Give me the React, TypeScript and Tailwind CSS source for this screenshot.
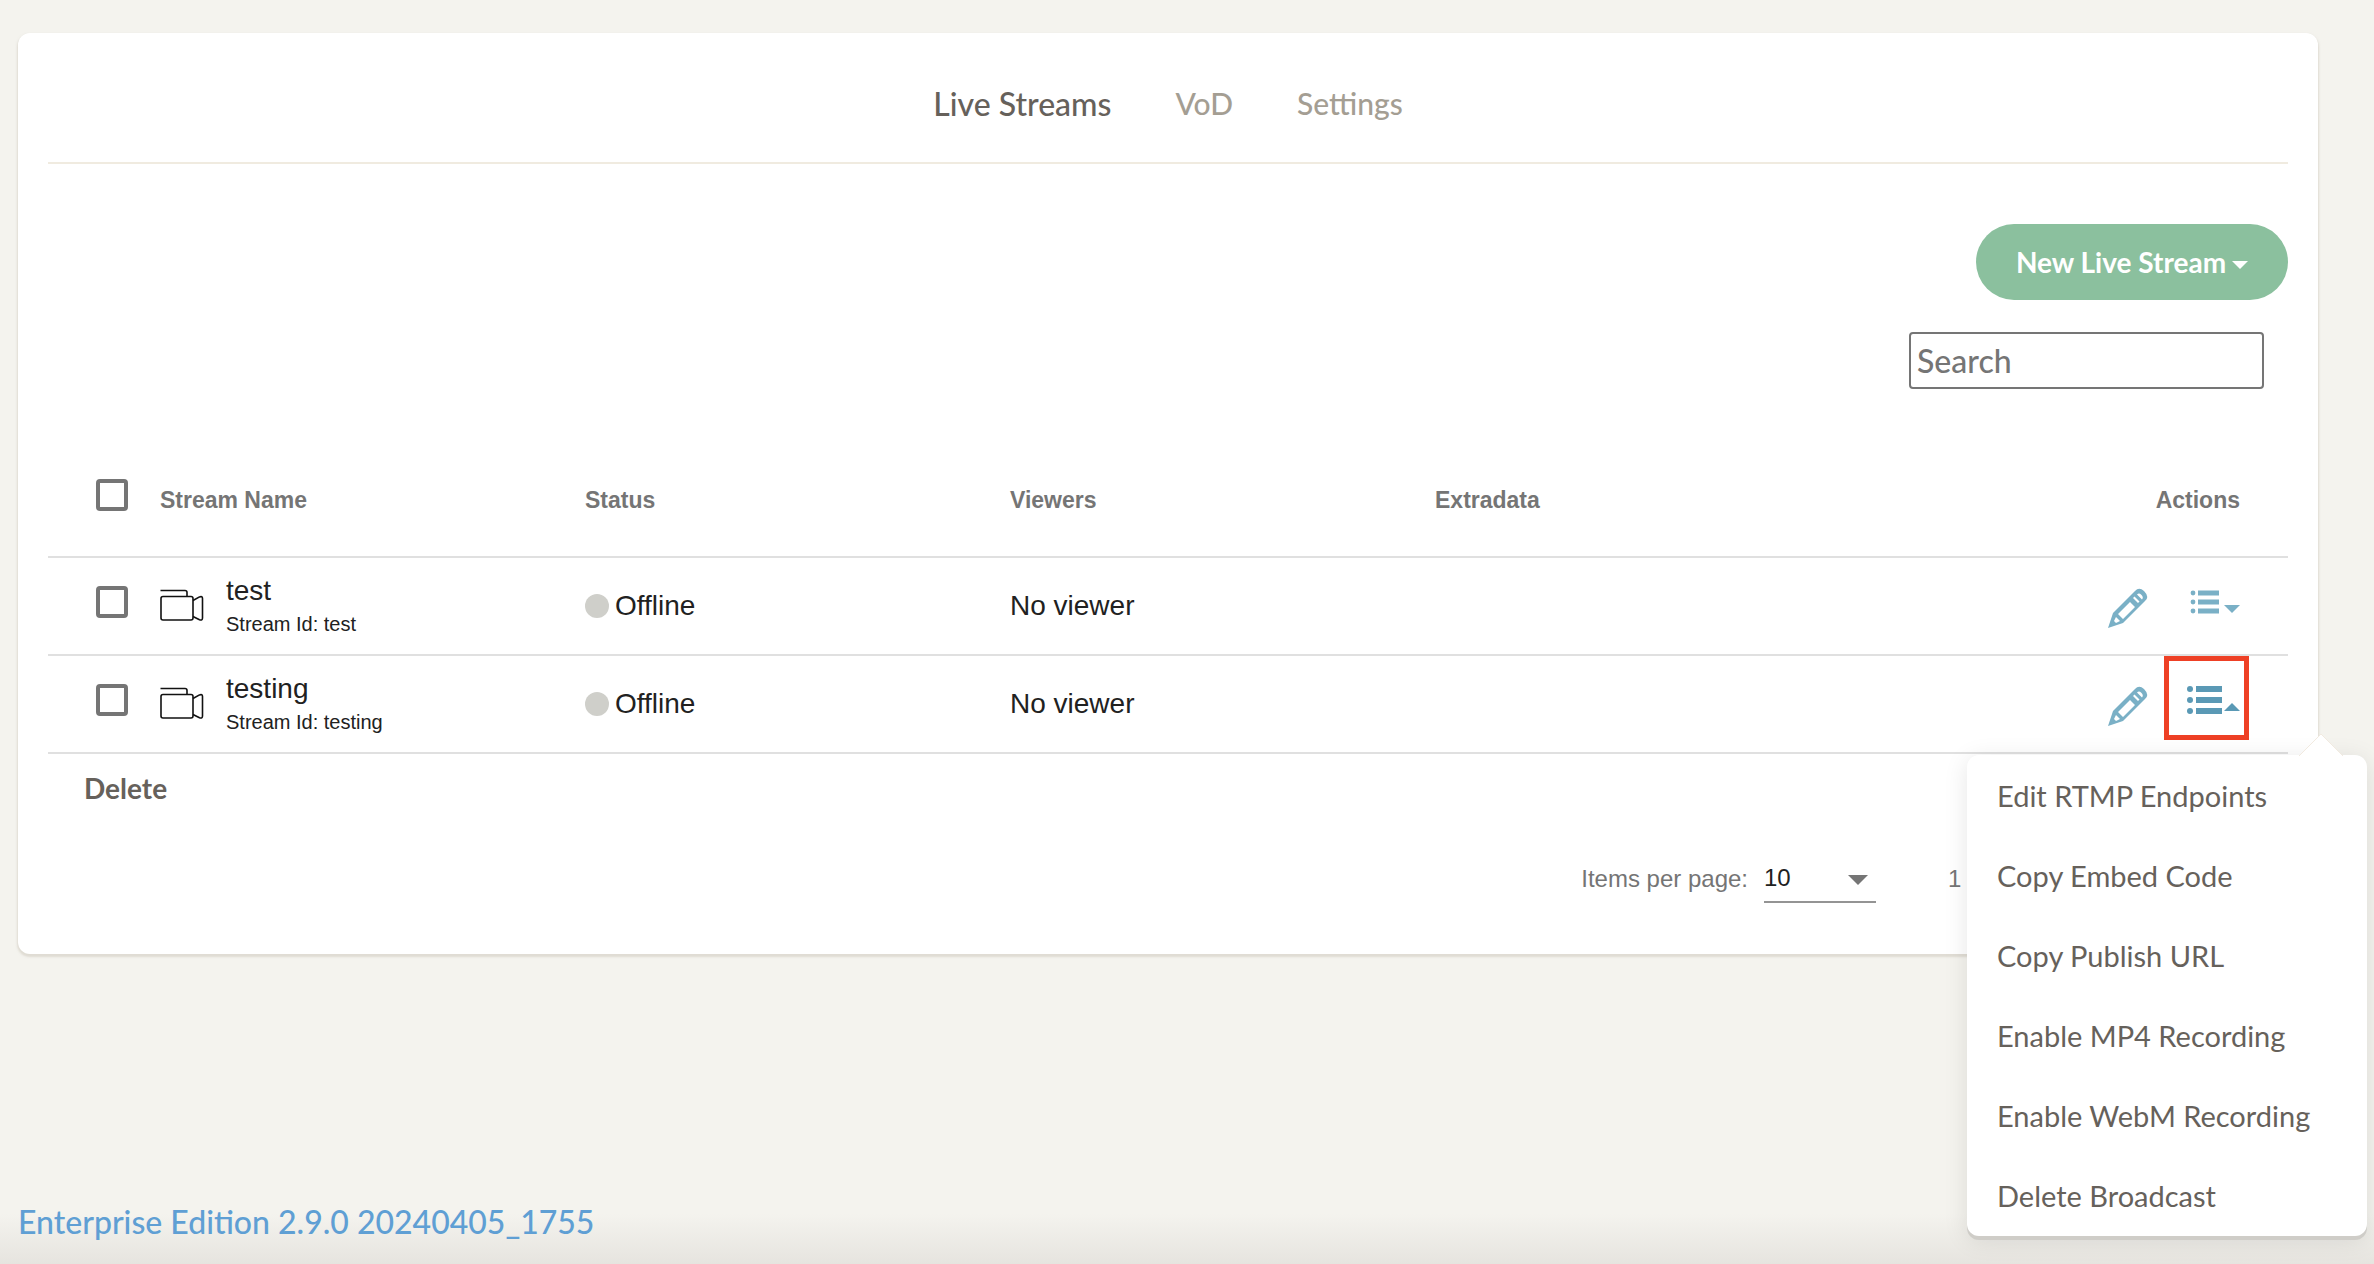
import { useState } from "react";

const streams = [
  { id: "test", name: "test", status: "Offline", viewers: "No viewer" },
  { id: "testing", name: "testing", status: "Offline", viewers: "No viewer" },
];

const tabs = ["Live Streams", "VoD", "Settings"];

const menuItems = [
  "Edit RTMP Endpoints",
  "Copy Embed Code",
  "Copy Publish URL",
  "Enable MP4 Recording",
  "Enable WebM Recording",
  "Delete Broadcast",
];

function CameraIcon() {
  return (
    <svg width="44" height="34" viewBox="0 0 44 34" fill="none" stroke="#111" strokeWidth="1.6" strokeLinejoin="round">
      <path d="M0.500 1.500H25q2 0 2 2v4" />
      <rect x="1" y="7.500" width="32" height="23.500" rx="2" />
      <path d="M33 11.500l6.500-3.600q3-1 3 1.600v19.500q0 2.800-3 1.800L33 27.500" />
    </svg>
  );
}

function PencilIcon() {
  return (
    <svg width="40" height="40" viewBox="0 0 40 40" fill="none">
      <path
        fill="#7ab0c6"
        fillRule="evenodd"
        d="M0 40L5 25L27 3Q31-1.500 36 3Q42 9 37 13L15 35ZM10 26L15 31L27 19L22 14ZM25 10L30 15L31.500 13.500L26.500 8.500ZM29 6.500L34 11.500Q36 9 33 6.500Q31 4.500 29 6.500ZM8 29L6 33L8 35L12 33Z"
      />
    </svg>
  );
}

function ListIcon({ open }: { open: boolean }) {
  return open ? (
    <svg width="54" height="30" viewBox="0 0 54 30" fill="#5a99b5">
      <circle cx="4" cy="4" r="3" />
      <circle cx="4" cy="15" r="3" />
      <circle cx="4" cy="26" r="3" />
      <path d="M10 1h26v6h-26zM10 12h26v6h-26zM10 23h26v6h-26zM38 26l8-8 8 8z" />
    </svg>
  ) : (
    <svg width="54" height="30" viewBox="0 0 54 30" fill="#7ab0c6">
      <circle cx="7" cy="6" r="2.4" />
      <circle cx="7" cy="15" r="2.4" />
      <circle cx="7" cy="24" r="2.4" />
      <path d="M12 3.500h21v5h-21zM12 12.500h21v5h-21zM12 21.500h21v5h-21zM38 18l8 8 8-8z" />
    </svg>
  );
}

function Checkbox({ label }: { label: string }) {
  return (
    <input
      type="checkbox"
      aria-label={label}
      className="block size-8 appearance-none rounded border-4 border-[#757575] bg-white checked:bg-[#757575]"
    />
  );
}

function ActionsMenu() {
  return (
    <div className="absolute top-[99px] -right-[118px] z-10 w-[400px] rounded-xl bg-white text-left shadow-[0_4px_0_#cfcdc8,0_4px_24px_rgba(0,0,0,0.10)]">
      <svg className="absolute -top-[22px] right-6" width="44" height="23" viewBox="0 0 44 23">
        <path d="M0 23L22 1L44 23Z" fill="#fff" />
        <path d="M0 23L22 1L44 23" fill="none" stroke="#f1eae0" />
      </svg>
      <ul className="pt-px">
        {menuItems.map((item) => (
          <li key={item}>
            <button className="block w-full px-[30px] py-6 text-left font-[Lato,sans-serif] text-[29px] leading-8 text-[#66615b]">
              {item}
            </button>
          </li>
        ))}
      </ul>
    </div>
  );
}

export default function App() {
  const [openId, setOpenId] = useState("testing");

  return (
    <div className="flex min-h-screen flex-col overflow-x-hidden bg-[#f4f3ee] bg-[linear-gradient(to_top,#e6e4df,#f4f3ee_50px)] pt-[33px] pl-[18px] font-['Liberation_Sans',Arial,sans-serif]">
      <main className="mr-14 rounded-xl bg-white px-[30px] shadow-[0_2px_2px_1px_rgba(204,197,185,0.5)]">
        <nav className="flex h-[131px] items-center justify-center gap-16 border-b-2 border-[#f0ebe0] pt-3 font-[Lato,sans-serif]">
          {tabs.map((tab, i) => (
            <a
              key={tab}
              href="#"
              className={i === 0 ? "text-[32px] font-medium text-[#66615b]" : "text-[30px] font-medium text-[#a49e93]"}
            >
              {tab}
            </a>
          ))}
        </nav>

        <div className="flex flex-col items-end pt-[60px] font-[Lato,sans-serif]">
          <button className="flex h-[76px] w-[312px] items-center justify-center gap-1.5 rounded-full bg-[#8bc09e] text-[28px] font-bold text-white">
            New Live Stream
            <svg className="mt-1.5" width="16" height="8" viewBox="0 0 16 8" fill="currentColor">
              <path d="M0 0h16l-8 8z" />
            </svg>
          </button>
          <input
            type="search"
            placeholder="Search"
            aria-label="Search"
            className="mt-8 mr-6 h-[57px] w-[355px] rounded border-2 border-[#757575] px-1.5 text-[32px] font-medium placeholder:text-[#757575]"
          />
        </div>

        <table className="mt-14 w-full table-fixed text-left text-[28px] text-[#212121]">
          <thead>
            <tr className="h-28 border-b-2 border-[#e0e0e0] text-[23px] text-[#757575]">
              <th className="w-28 pb-3 pl-12">
                <Checkbox label="Select all streams" />
              </th>
              <th>Stream Name</th>
              <th>Status</th>
              <th>Viewers</th>
              <th>Extradata</th>
              <th className="w-[428px] pr-12 text-right">Actions</th>
            </tr>
          </thead>
          <tbody>
            {streams.map((stream) => {
              const open = stream.id === openId;
              return (
                <tr key={stream.id} className="h-[98px] border-b-2 border-[#e0e0e0]">
                  <td className="pb-2 pl-12">
                    <Checkbox label={`Select ${stream.name}`} />
                  </td>
                  <td>
                    <div className="flex items-center gap-[22px]">
                      <CameraIcon />
                      <div>
                        <div className="leading-9">{stream.name}</div>
                        <div className="text-xl leading-[30px]">Stream Id: {stream.id}</div>
                      </div>
                    </div>
                  </td>
                  <td>
                    <div className="flex items-center gap-1.5">
                      <span className="size-6 rounded-full bg-[#cfcfca]" />
                      {stream.status}
                    </div>
                  </td>
                  <td>{stream.viewers}</td>
                  <td />
                  <td className="align-top">
                    <div className="relative mr-[39px] flex h-[84px] items-center justify-end gap-4">
                      <button aria-label={`Edit ${stream.name}`} className="pt-4">
                        <PencilIcon />
                      </button>
                      <button
                        aria-label={`Actions for ${stream.name}`}
                        aria-expanded={open}
                        onClick={() => setOpenId(open ? "" : stream.id)}
                        className={
                          open
                            ? "flex h-[84px] w-[85px] items-center justify-center border-[5px] border-[#ee4025] pt-1 pl-3"
                            : "flex h-[84px] w-[85px] items-center justify-center pt-1 pl-3"
                        }
                      >
                        <ListIcon open={open} />
                      </button>
                      {open && <ActionsMenu />}
                    </div>
                  </td>
                </tr>
              );
            })}
          </tbody>
        </table>

        <button className="mt-3.5 ml-9 block font-[Lato,sans-serif] text-[28px] leading-10 font-bold text-[#66615b]">
          Delete
        </button>

        <div className="flex h-[146px] items-center justify-end pb-1 text-2xl text-[#757575]">
          <label htmlFor="page-size">Items per page:</label>
          <div className="relative mr-[72px] ml-4">
            <select
              id="page-size"
              className="h-12 w-28 appearance-none border-b-2 border-[#949494] bg-transparent text-[#212121]"
            >
              <option>10</option>
              <option>25</option>
            </select>
            <svg className="pointer-events-none absolute top-5 right-2" width="20" height="10" viewBox="0 0 20 10" fill="#757575">
              <path d="M0 0h20L10 10z" />
            </svg>
          </div>
          <span className="w-[340px]">1</span>
        </div>
      </main>

      <footer className="mt-auto pb-5 font-[Lato,sans-serif] text-[32px] leading-[44px] font-medium text-[#5f9fd4]">
        Enterprise Edition 2.9.0 20240405_1755
      </footer>
    </div>
  );
}
